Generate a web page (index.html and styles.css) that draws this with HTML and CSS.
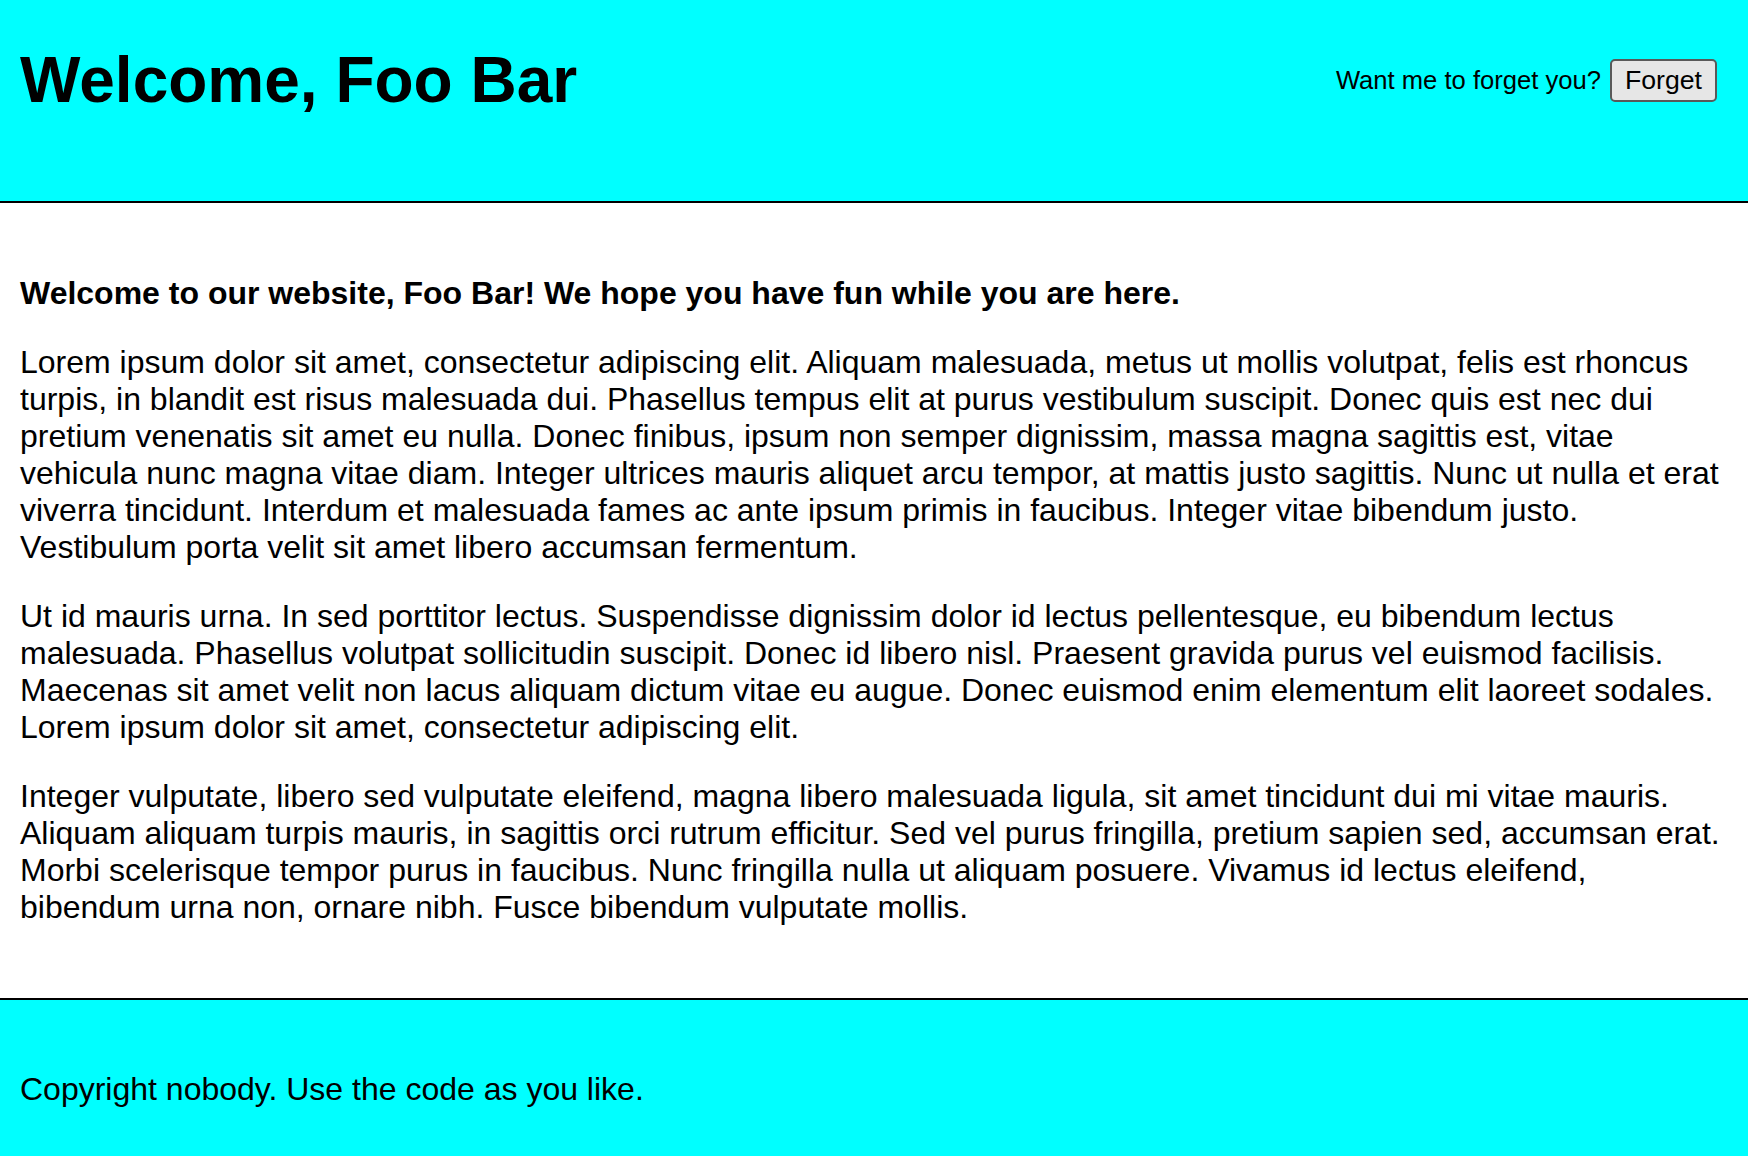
FILE: index.html
```html
<!DOCTYPE html>
<html lang="en">
<head>
<meta charset="utf-8">
<title>Welcome, Foo Bar</title>
<link rel="stylesheet" href="styles.css">
</head>
<body>
<header class="site-header">
  <div class="header-row">
    <h1 class="title">Welcome, Foo Bar</h1>
    <div class="forget">
      <span class="forget-label">Want me to forget you?</span>
      <button class="forget-btn" type="button">Forget</button>
    </div>
  </div>
</header>
<main class="content">
  <p class="intro">Welcome to our website, Foo Bar! We hope you have fun while you are here.</p>
  <p>Lorem ipsum dolor sit amet, consectetur adipiscing elit. Aliquam malesuada, metus ut mollis volutpat, felis est rhoncus turpis, in blandit est risus malesuada dui. Phasellus tempus elit at purus vestibulum suscipit. Donec quis est nec dui pretium venenatis sit amet eu nulla. Donec finibus, ipsum non semper dignissim, massa magna sagittis est, vitae vehicula nunc magna vitae diam. Integer ultrices mauris aliquet arcu tempor, at mattis justo sagittis. Nunc ut nulla et erat viverra tincidunt. Interdum et malesuada fames ac ante ipsum primis in faucibus. Integer vitae bibendum justo. Vestibulum porta velit sit amet libero accumsan fermentum.</p>
  <p>Ut id mauris urna. In sed porttitor lectus. Suspendisse dignissim dolor id lectus pellentesque, eu bibendum lectus malesuada. Phasellus volutpat sollicitudin suscipit. Donec id libero nisl. Praesent gravida purus vel euismod facilisis. Maecenas sit amet velit non lacus aliquam dictum vitae eu augue. Donec euismod enim elementum elit laoreet sodales. Lorem ipsum dolor sit amet, consectetur adipiscing elit.</p>
  <p>Integer vulputate, libero sed vulputate eleifend, magna libero malesuada ligula, sit amet tincidunt dui mi vitae mauris. Aliquam aliquam turpis mauris, in sagittis orci rutrum efficitur. Sed vel purus fringilla, pretium sapien sed, accumsan erat. Morbi scelerisque tempor purus in faucibus. Nunc fringilla nulla ut aliquam posuere. Vivamus id lectus eleifend, bibendum urna non, ornare nibh. Fusce bibendum vulputate mollis.</p>
</main>
<footer class="site-footer">
  <p class="copyright">Copyright nobody. Use the code as you like.</p>
</footer>
</body>
</html>
```
FILE: styles.css
```css
html, body {
  margin: 0;
  padding: 0;
}
body {
  font-family: "Liberation Sans", Arial, sans-serif;
  font-size: 32px;
  color: #000;
  background: #fff;
  overflow: hidden;
}
.site-header {
  background: #00ffff;
  border-bottom: 2px solid #000;
  padding: 43px 31px 0 20px;
  box-sizing: content-box;
  height: 158px;
}
.header-row {
  display: flex;
  justify-content: space-between;
  align-items: center;
}
.title {
  margin: 0;
  font-size: 64px;
  font-weight: bold;
  line-height: normal;
}
.forget {
  display: flex;
  align-items: center;
  gap: 9px;
}
.forget-label {
  font-size: 25.6px;
}
.forget-btn {
  font-family: "Liberation Sans", Arial, sans-serif;
  font-size: 26.67px;
  color: #000;
  background: #e6e6e6;
  border: 2px solid #595959;
  border-radius: 5px;
  padding: 4px 13px;
  line-height: normal;
}
.content {
  padding: 72px 20px 40px;
}
.content p {
  margin: 0 0 32px;
  line-height: normal;
}
.content .intro {
  font-weight: bold;
}
.site-footer {
  background: #00ffff;
  border-top: 2px solid #000;
  padding: 71px 20px 60px;
}
.copyright {
  margin: 0;
  line-height: normal;
}
```
